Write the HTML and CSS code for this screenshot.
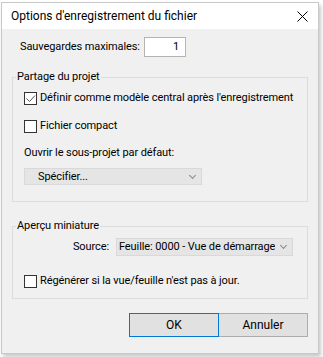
FILE: index.html
```html
<!DOCTYPE html>
<html>

<head>
    <meta charset="utf-8" />
    <title>Options d'enregistrement du fichier</title>
    <link rel="stylesheet" href="styles.css">
</head>

<body>
    <div class="window">
        <div class="titlebar">
            <span class="title">Options d'enregistrement du fichier</span>
            <span class="close">
                <svg width="11" height="11" viewBox="0 0 11 11">
                    <path d="M0.5 0.5 L10.5 10.5 M10.5 0.5 L0.5 10.5" stroke="#000" stroke-width="1" fill="none" />
                </svg>
            </span>
        </div>
        <div class="content">
            <div class="row-max">
                <span class="max-label">Sauvegardes maximales:</span>
                <span class="num-input">1</span>
            </div>

            <div class="group group-share">
                <span class="group-title">Partage du projet</span>
                <label class="check-row first">
                    <span class="checkbox">
                        <svg width="11" height="11" viewBox="0 0 11 11">
                            <path d="M1.5 5.5 L4.5 8.5 L10 2.5" stroke="#555" stroke-width="1" fill="none" />
                        </svg>
                    </span>
                    <span>Définir comme modèle central après l'enregistrement</span>
                </label>
                <label class="check-row">
                    <span class="checkbox"></span>
                    <span>Fichier compact</span>
                </label>
                <div class="text-row">Ouvrir le sous-projet par défaut:</div>
                <div class="combo combo-spec">
                    <span class="combo-text">Spécifier...</span>
                    <span class="chevron"></span>
                </div>
            </div>

            <div class="group group-thumb">
                <span class="group-title">Aperçu miniature</span>
                <div class="source-row">
                    <span class="source-label">Source:</span>
                    <div class="combo combo-source">
                        <span class="combo-text">Feuille: 0000 - Vue de démarrage</span>
                        <span class="chevron"></span>
                    </div>
                </div>
                <label class="check-row regen">
                    <span class="checkbox"></span>
                    <span>Régénérer si la vue/feuille n'est pas à jour.</span>
                </label>
            </div>

            <div class="buttons">
                <button class="btn btn-ok">OK</button>
                <button class="btn">Annuler</button>
            </div>
        </div>
    </div>
</body>

</html>
```

FILE: styles.css
```css
* {
    margin: 0;
    padding: 0;
    box-sizing: border-box;
}

body {
    width: 323px;
    height: 357px;
    background: #fff;
    font-family: Roboto, "Noto Sans", sans-serif;
    font-size: 11px;
    letter-spacing: -0.1px;
    line-height: 16px;
    color: #000;
    white-space: nowrap;
    overflow: hidden;
}

.window {
    width: 318px;
    height: 352px;
    margin: 2px 0 0 1px;
    background: #f0f0f0;
    border: 1px solid #c8c8c8;
    box-shadow: 2px 3px 4px rgba(0, 0, 0, 0.22);
}

.titlebar {
    height: 26px;
    background: #fff;
    display: flex;
    align-items: center;
    justify-content: space-between;
    padding: 0 10px 0 9px;
}

.title {
    font-size: 12px;
    letter-spacing: 0;
}

.close {
    display: flex;
    margin-top: 1px;
}

.content {
    padding: 0 10px;
}

.row-max {
    display: flex;
    align-items: center;
    margin-top: 8px;
    padding-left: 8px;
}

.max-label {
    width: 124px;
}

.num-input {
    width: 42px;
    height: 20px;
    background: #fff;
    border: 1px solid #b4b4b4;
    text-align: right;
    padding-right: 6px;
    line-height: 17px;
}

.group {
    position: relative;
    border: 1px solid #dcdcdc;
    padding-left: 11px;
}

.group-title {
    position: absolute;
    top: -9px;
    left: 3px;
    padding: 0 1px;
    background: #f0f0f0;
}

.group-share {
    margin-top: 20px;
    padding-bottom: 16px;
}

.group-thumb {
    margin-top: 24px;
    padding-bottom: 9px;
}

.check-row {
    display: flex;
    align-items: center;
    height: 16px;
    margin-top: 12px;
}

.check-row.regen {
    margin-top: 17px;
}

.checkbox {
    flex: none;
    width: 13px;
    height: 13px;
    background: #fff;
    border: 1px solid #333;
    margin-right: 3px;
    display: flex;
}

.text-row {
    margin-top: 11px;
}

.combo {
    display: flex;
    align-items: center;
    justify-content: space-between;
    background: #e5e5e5;
    border: 1px solid #d9d9d9;
    overflow: hidden;
}

.combo-text {
    overflow: hidden;
}

.combo-spec {
    width: 178px;
    height: 17px;
    margin-top: 7px;
    padding: 0 6px 0 13px;
}

.source-row {
    display: flex;
    align-items: center;
    margin-top: 11px;
}

.source-label {
    width: 85px;
    text-align: right;
    margin-right: 7px;
}

.combo-source {
    width: 177px;
    height: 18px;
    padding: 0 6px 0 2px;
}

.chevron {
    flex: none;
    width: 5px;
    height: 5px;
    margin-left: 4px;
    margin-bottom: 3px;
    border-right: 1px solid #8a8a8a;
    border-bottom: 1px solid #8a8a8a;
    transform: rotate(45deg);
}

.buttons {
    display: flex;
    justify-content: flex-end;
    margin-top: 14px;
}

.btn {
    width: 90px;
    height: 24px;
    font-family: inherit;
    font-size: 12px;
    color: #000;
    background: #e1e1e1;
    border: 1px solid #adadad;
}

.btn-ok {
    width: 90px;
    margin-right: -1px;
    border: 1px solid #0078d7;
    position: relative;
}
```
